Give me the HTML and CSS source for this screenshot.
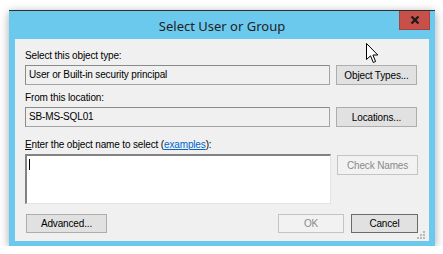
FILE: index.html
```html
<!DOCTYPE html>
<html lang="en">
<head>
    <meta charset="UTF-8">
    <title>Select User or Group</title>
    <link rel="stylesheet" href="styles.css">
</head>
<body>
    <div class="window">
        <div class="titlebar">
            <span class="title">Select User or Group</span>
            <div class="close">
                <svg width="10" height="8" viewBox="0 0 10 8">
                    <path d="M1.5 0.5 L8.5 7.5 M8.5 0.5 L1.5 7.5" stroke="#1b1b1b" stroke-width="2.2"/>
                </svg>
            </div>
        </div>
        <div class="panel">
            <div class="label">Select this object type:</div>
            <div class="row">
                <div class="field">User or Built-in security principal</div>
                <button class="btn">Object Types...</button>
            </div>

            <div class="label">From this location:</div>
            <div class="row gap">
                <div class="field">SB-MS-SQL01</div>
                <button class="btn">Locations...</button>
            </div>

            <div class="label"><u>E</u>nter the object name to select (<a href="#">examples</a>):</div>
            <div class="row top">
                <div class="names"><span class="caret"></span></div>
                <button class="btn disabled check">Check Names</button>
            </div>

            <div class="footer">
                <button class="btn">Advanced...</button>
                <div class="actions">
                    <button class="btn ok disabled">OK</button>
                    <button class="btn cancel">Cancel</button>
                </div>
            </div>

            <!-- grip de redimensionar -->
            <svg class="grip" width="8" height="8" viewBox="0 0 8 8">
                <rect x="6" y="0" width="2" height="2" fill="#b8b8b8"/>
                <rect x="3" y="3" width="2" height="2" fill="#b8b8b8"/>
                <rect x="6" y="3" width="2" height="2" fill="#b8b8b8"/>
                <rect x="0" y="6" width="2" height="2" fill="#b8b8b8"/>
                <rect x="3" y="6" width="2" height="2" fill="#b8b8b8"/>
                <rect x="6" y="6" width="2" height="2" fill="#b8b8b8"/>
            </svg>
        </div>
    </div>

    <!-- ponteiro do mouse -->
    <svg class="cursor" width="13" height="21" viewBox="0 0 13 21">
        <path d="M0.5 0.5 L0.5 16.5 L4.5 12.8 L7.3 19.5 L9.6 18.5 L6.9 12 L11.8 12 Z" fill="#fff" stroke="#000" stroke-width="1"/>
    </svg>
</body>
</html>
```

FILE: styles.css
```css
body {
    margin: 0;
    background-color: #fff;
    font-family: "Liberation Sans", Arial, sans-serif;
    font-size: 10px;
    letter-spacing: -0.15px;
    color: #000;
}

.window {
    margin: 10px 0 0 9px;
    width: 426px;
    height: 235px;
    background-color: #6bc9ed;
    border-top: 1px solid #2e2e2e;
    box-shadow: 0 2px 9px rgba(0, 0, 0, 0.35);
    display: flex;
    flex-direction: column;
}

.titlebar {
    position: relative;
    height: 28px;
    display: flex;
    align-items: center;
    justify-content: center;
}

.title {
    font-family: "Noto Sans", sans-serif;
    font-size: 13px;
    letter-spacing: 0;
    color: #1e1e1e;
    padding-top: 1px;
}

.close {
    position: absolute;
    top: 0;
    right: 5px;
    width: 29px;
    height: 18px;
    background-color: #c7504a;
    border: 1px solid #a8413c;
    border-top: none;
    display: flex;
    align-items: center;
    justify-content: center;
}

.panel {
    position: relative;
    flex: 1;
    margin: 0 6px 5px 6px;
    background-color: #f0f0f0;
    padding: 11px 11px 0 10px;
    display: flex;
    flex-direction: column;
}

.label {
    height: 15px;
    line-height: 12px;
}

.label u {
    text-decoration: underline;
}

.label a {
    color: #0066cc;
}

.row {
    display: flex;
    align-items: center;
    gap: 6px;
    margin-bottom: 7px;
}

.row.gap {
    margin-bottom: 12px;
}

.row.top {
    align-items: flex-start;
    margin-bottom: 10px;
}

.field {
    width: 300px;
    height: 18px;
    line-height: 18px;
    padding-left: 3px;
    border: 1px solid #a3a3a3;
    border-top-color: #8a8a8a;
    border-left-color: #8a8a8a;
    background-color: #f0f0f0;
}

.names {
    width: 301px;
    height: 44px;
    padding: 3px 0 0 2px;
    border: 1px solid #e3e3e3;
    border-top: 2px solid #828282;
    border-left: 2px solid #828282;
    background-color: #fff;
}

.caret {
    display: block;
    width: 1px;
    height: 11px;
    background-color: #000;
}

.btn {
    width: 81px;
    height: 20px;
    padding: 0;
    font-family: "Liberation Sans", Arial, sans-serif;
    font-size: 10px;
    letter-spacing: -0.15px;
    color: #000;
    background-color: #e1e1e1;
    border: 1px solid #adadad;
    border-radius: 0;
}

.btn.check {
    margin-top: 1px;
}

.btn.disabled {
    color: #8a8a8a;
    background-color: #f2f2f2;
    border-color: #c4c4c4;
}

.footer {
    display: flex;
    justify-content: space-between;
    align-items: center;
    padding-left: 1px;
}

.footer .btn {
    height: 19px;
}

.actions {
    display: flex;
    gap: 7px;
}

.btn.ok {
    width: 66px;
}

.btn.cancel {
    width: 67px;
    border-color: #6a6a6a;
}

.grip {
    position: absolute;
    right: 4px;
    bottom: 2px;
}

.cursor {
    position: absolute;
    left: 366px;
    top: 43px;
}
```
